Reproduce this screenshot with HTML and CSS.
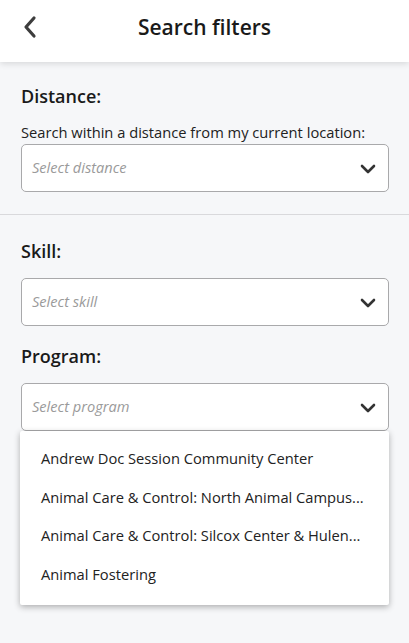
FILE: index.html
```html
<!DOCTYPE html>
<html lang="en">
<head>
    <meta charset="UTF-8">
    <meta name="viewport" content="width=device-width, initial-scale=1.0">
    <title>Search filters</title>
    <link rel="stylesheet" href="styles.css">
</head>
<body>

    <header class="top-bar">
        <button class="back-btn" aria-label="Back">
            <svg width="16" height="24" viewBox="0 0 16 24">
                <path d="M12 3 L4 12 L12 21" fill="none" stroke="#3d3d3d" stroke-width="3.2" stroke-linecap="round" stroke-linejoin="round"/>
            </svg>
        </button>
        <h1>Search filters</h1>
    </header>

    <main class="filters">
        <section class="filter-section">
            <h2>Distance:</h2>
            <p class="hint">Search within a distance from my current location:</p>
            <div class="select-box">
                <span class="placeholder">Select distance</span>
                <svg class="chevron" width="16" height="10" viewBox="0 0 16 10">
                    <path d="M2 2 L8 8 L14 2" fill="none" stroke="#333" stroke-width="2.6" stroke-linecap="round" stroke-linejoin="round"/>
                </svg>
            </div>
        </section>

        <section class="filter-section no-border">
            <h2>Skill:</h2>
            <div class="select-box">
                <span class="placeholder">Select skill</span>
                <svg class="chevron" width="16" height="10" viewBox="0 0 16 10">
                    <path d="M2 2 L8 8 L14 2" fill="none" stroke="#333" stroke-width="2.6" stroke-linecap="round" stroke-linejoin="round"/>
                </svg>
            </div>

            <h2 class="spaced">Program:</h2>
            <div class="select-wrap">
                <div class="select-box">
                    <span class="placeholder">Select program</span>
                    <svg class="chevron" width="16" height="10" viewBox="0 0 16 10">
                        <path d="M2 2 L8 8 L14 2" fill="none" stroke="#333" stroke-width="2.6" stroke-linecap="round" stroke-linejoin="round"/>
                    </svg>
                </div>
                <ul class="dropdown">
                    <li>Andrew Doc Session Community Center</li>
                    <li>Animal Care &amp; Control: North Animal Campus...</li>
                    <li>Animal Care &amp; Control: Silcox Center &amp; Hulen...</li>
                    <li>Animal Fostering</li>
                </ul>
            </div>
        </section>
    </main>

</body>
</html>
```

FILE: styles.css
```css
html, body {
    min-height: 100%;
}
body {
    font-family: "Open Sans", "Noto Sans", sans-serif;
    background-color: #f6f7f9;
    margin: 0;
    min-height: 643px;
    color: #1e1e1e;
}
.top-bar {
    height: 62px;
    box-sizing: border-box;
    padding-bottom: 8px;
    background: white;
    display: flex;
    align-items: center;
    justify-content: center;
    position: relative;
    z-index: 1;
    box-shadow: 0px 2px 6px rgba(0, 0, 0, 0.12);
}
.top-bar h1 {
    margin: 0;
    font-size: 21px;
    font-weight: 600;
    color: #1a1a1a;
}
.back-btn {
    position: absolute;
    left: 22px;
    top: 14px;
    background: none;
    border: none;
    padding: 0;
    width: 20px;
    height: 26px;
    display: flex;
    align-items: center;
    cursor: pointer;
}
.filters {
    min-height: 581px;
}
.filter-section {
    padding: 22px 20px 22px 21px;
    border-bottom: 1px solid #d9d9dc;
}
.filter-section.no-border {
    border-bottom: none;
    padding-top: 24px;
}
h2 {
    margin: 0 0 15px;
    font-size: 18px;
    line-height: 24px;
    font-weight: 600;
    color: #1a1a1a;
}
h2.spaced {
    margin-top: 18px;
}
.hint {
    margin: -1px 0 2px;
    font-size: 14.7px;
    line-height: 20px;
    color: #222;
}
.select-box {
    height: 46px;
    background: white;
    border: 1px solid #a9a9ab;
    border-radius: 5px;
    display: flex;
    align-items: center;
    justify-content: space-between;
    padding: 0 12px 0 10px;
}
.placeholder {
    font-size: 14.6px;
    font-style: italic;
    color: #9a9a9a;
    margin-top: -3px;
}
.chevron {
    margin-top: 2px;
}
.select-wrap {
    position: relative;
}
.dropdown {
    position: absolute;
    top: 100%;
    left: -1px;
    right: 0;
    z-index: 2;
    margin: 0;
    padding: 8px 0 12px;
    list-style: none;
    background: white;
    border-radius: 2px;
    box-shadow: 0px 2px 6px rgba(0, 0, 0, 0.3);
}
.dropdown li {
    height: 38.6px;
    line-height: 38px;
    padding-left: 21px;
    font-size: 14.7px;
    color: #222;
    white-space: nowrap;
}
```
